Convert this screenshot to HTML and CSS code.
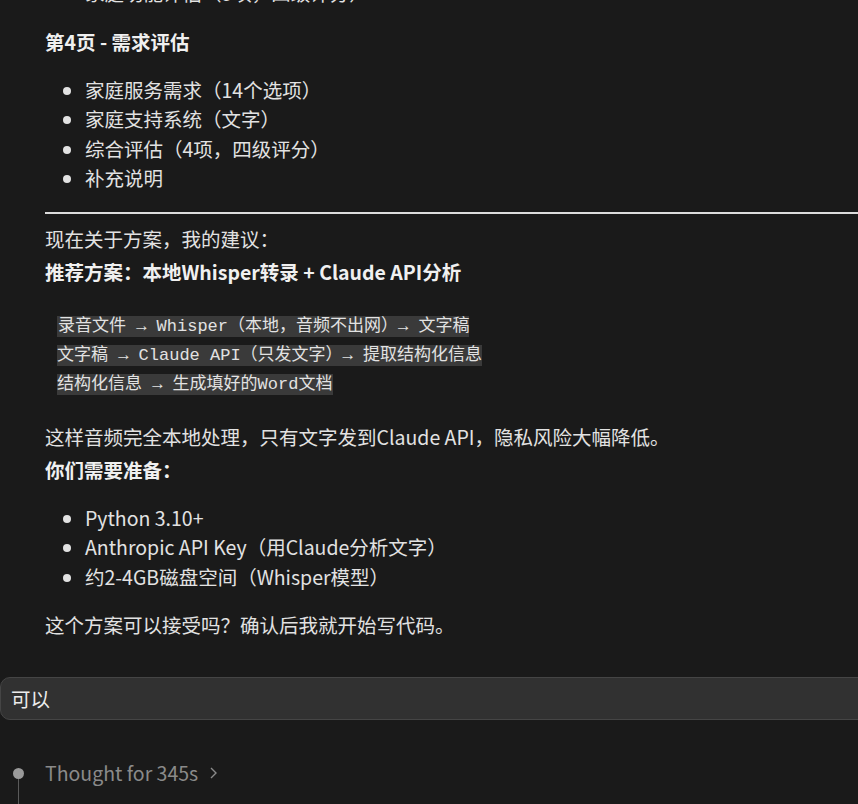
FILE: index.html
```html
<!DOCTYPE html>
<html lang="zh-CN">
<head>
    <meta charset="UTF-8">
    <meta name="viewport" content="width=device-width, initial-scale=1.0">
    <title>Chat</title>
    <link rel="stylesheet" href="styles.css">
</head>
<body>
    <div class="chat">
        <!-- Assistant reply -->
        <div class="reply">
            <ul class="items items-first">
                <li>家庭功能评估（5项，四级评分）</li>
            </ul>

            <p class="heading">第4页 - 需求评估</p>
            <ul class="items">
                <li>家庭服务需求（14个选项）</li>
                <li>家庭支持系统（文字）</li>
                <li>综合评估（4项，四级评分）</li>
                <li>补充说明</li>
            </ul>

            <hr class="rule">

            <p class="text">现在关于方案，我的建议：</p>
            <p class="heading heading-tight">推荐方案：本地Whisper转录 + Claude API分析</p>

            <div class="code"><code>录音文件 → Whisper（本地，音频不出网）→ 文字稿
文字稿 → Claude API（只发文字）→ 提取结构化信息
结构化信息 → 生成填好的Word文档</code></div>

            <p class="text">这样音频完全本地处理，只有文字发到Claude API，隐私风险大幅降低。</p>
            <p class="heading heading-tight">你们需要准备：</p>
            <ul class="items">
                <li>Python 3.10+</li>
                <li>Anthropic API Key（用Claude分析文字）</li>
                <li>约2-4GB磁盘空间（Whisper模型）</li>
            </ul>

            <p class="text text-last">这个方案可以接受吗？确认后我就开始写代码。</p>
        </div>

        <!-- User message -->
        <div class="user-msg">可以</div>

        <!-- Thinking step -->
        <div class="thought">
            <div class="thought-track">
                <span class="thought-dot"></span>
                <span class="thought-line"></span>
            </div>
            <span class="thought-label">Thought for 345s</span>
            <svg class="chevron" width="12" height="14" viewBox="0 0 12 14">
                <polyline points="3,2 8,7 3,12" fill="none" stroke="#8a8a8a" stroke-width="1.4"/>
            </svg>
        </div>
    </div>
</body>
</html>
```

FILE: styles.css
```css
html, body {
    margin: 0;
    padding: 0;
    height: 100%;
    overflow: hidden;
}
body {
    background-color: #1a1a1a;
    color: #e2e2e2;
    font-family: "Noto Sans CJK SC", "Noto Sans", sans-serif;
    font-size: 19.5px;
}
.chat {
    margin-top: -22px;
}
.reply {
    padding-left: 45px;
}
.items {
    margin: 18px 0 19px;
    padding-left: 40px;
    line-height: 29.5px;
}
.items li {
    height: 29.5px;
}
.items-first {
    margin-top: 0;
}
.heading {
    margin: 0;
    height: 30px;
    line-height: 30px;
    font-weight: 700;
    color: #f0f0f0;
}
.heading-tight {
    margin-top: 3px;
}
.text {
    margin: 0;
    height: 30px;
    line-height: 30px;
}
.rule {
    border: none;
    height: 2px;
    background-color: #dcdcdc;
    margin: 0 -20px 10px 0;
}
.code {
    margin: 25px 0 23px 12px;
    white-space: pre;
    font-family: "Liberation Mono", "Noto Sans CJK SC", monospace;
    font-size: 17px;
    line-height: 29px;
}
.code code {
    font-family: inherit;
    font-size: inherit;
    line-height: inherit;
    background-color: #3a3a3a;
    color: #e2e2e2;
    padding: 1px 1px;
}
.text-last {
    margin-bottom: 37px;
}
.user-msg {
    margin-right: -30px;
    height: 41px;
    line-height: 41px;
    padding-left: 10px;
    background-color: #313131;
    border: 1px solid #454545;
    border-radius: 10px;
    color: #ececec;
}
.thought {
    display: flex;
    align-items: flex-start;
    margin-top: 38px;
    height: 80px;
}
.thought-track {
    width: 36px;
    display: flex;
    flex-direction: column;
    align-items: center;
    padding-top: 10px;
    height: 100%;
    box-sizing: border-box;
}
.thought-dot {
    width: 11px;
    height: 11px;
    border-radius: 50%;
    background-color: #9a9a9a;
}
.thought-line {
    width: 1px;
    flex: 1;
    background-color: #5a5a5a;
}
.thought-label {
    margin-left: 9px;
    color: #8a8a8a;
    line-height: 30px;
}
.chevron {
    margin: 8px 0 0 10px;
}
```
